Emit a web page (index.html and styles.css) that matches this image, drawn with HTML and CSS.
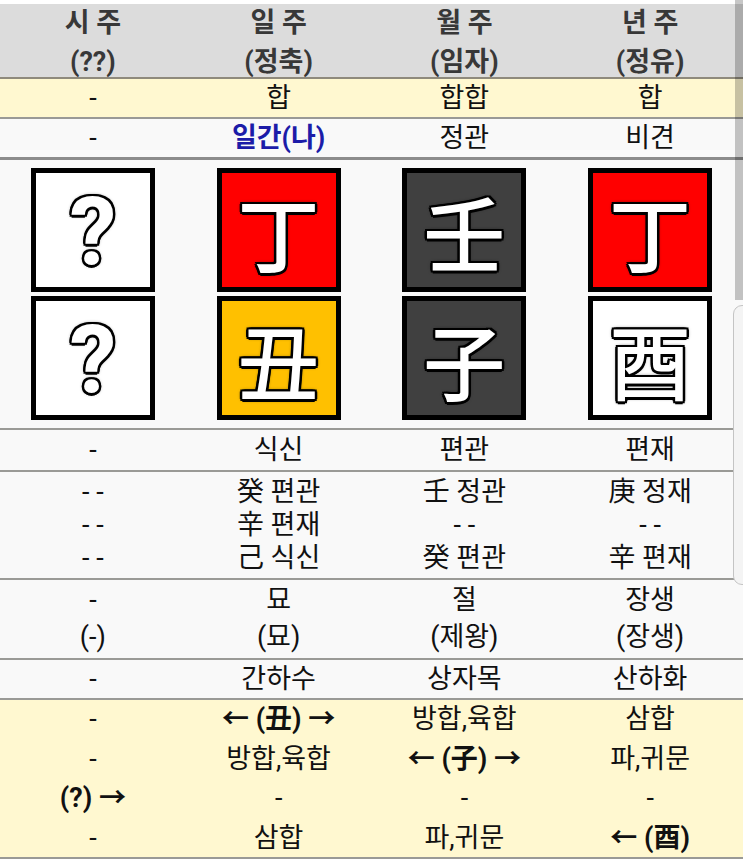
FILE: index.html
```html
<!DOCTYPE html>
<html lang="ko">
<head>
<meta charset="utf-8">
<link rel="stylesheet" href="styles.css">
</head>
<body>
<div class="page">
  <div class="table">
    <div class="row head">
      <div class="cell"><span>시 주</span><span>(??)</span></div>
      <div class="cell"><span>일 주</span><span>(정축)</span></div>
      <div class="cell"><span>월 주</span><span>(임자)</span></div>
      <div class="cell"><span>년 주</span><span>(정유)</span></div>
    </div>
    <div class="row yellow r1">
      <div class="cell">-</div>
      <div class="cell">합</div>
      <div class="cell">합합</div>
      <div class="cell">합</div>
    </div>
    <div class="row plain r1 thick">
      <div class="cell">-</div>
      <div class="cell blue">일간(나)</div>
      <div class="cell">정관</div>
      <div class="cell">비견</div>
    </div>
    <div class="row plain pillars">
      <div class="cell stack">
        <div class="box white"><span class="q">?</span></div>
        <div class="box white"><span class="q">?</span></div>
      </div>
      <div class="cell stack">
        <div class="box red"><span class="han">丁</span></div>
        <div class="box amber"><span class="han">丑</span></div>
      </div>
      <div class="cell stack">
        <div class="box dark"><span class="han">壬</span></div>
        <div class="box dark"><span class="han">子</span></div>
      </div>
      <div class="cell stack">
        <div class="box red"><span class="han">丁</span></div>
        <div class="box white"><span class="han">酉</span></div>
      </div>
    </div>
    <div class="row plain r1 r-sik">
      <div class="cell">-</div>
      <div class="cell">식신</div>
      <div class="cell">편관</div>
      <div class="cell">편재</div>
    </div>
    <div class="row plain multi r-jj">
      <div class="cell"><span>- -</span><span>- -</span><span>- -</span></div>
      <div class="cell"><span>癸 편관</span><span>辛 편재</span><span>己 식신</span></div>
      <div class="cell"><span>壬 정관</span><span>- -</span><span>癸 편관</span></div>
      <div class="cell"><span>庚 정재</span><span>- -</span><span>辛 편재</span></div>
    </div>
    <div class="row plain multi r-un">
      <div class="cell"><span>-</span><span>(-)</span></div>
      <div class="cell"><span>묘</span><span>(묘)</span></div>
      <div class="cell"><span>절</span><span>(제왕)</span></div>
      <div class="cell"><span>장생</span><span>(장생)</span></div>
    </div>
    <div class="row plain r1 r-nap">
      <div class="cell">-</div>
      <div class="cell">간하수</div>
      <div class="cell">상자목</div>
      <div class="cell">산하화</div>
    </div>
    <div class="row yellow multi r-rel">
      <div class="cell"><span>-</span><span>-</span><span class="b">(?) →</span><span>-</span></div>
      <div class="cell"><span class="b">← (丑) →</span><span>방합,육합</span><span>-</span><span>삼합</span></div>
      <div class="cell"><span>방합,육합</span><span class="b">← (子) →</span><span>-</span><span>파,귀문</span></div>
      <div class="cell"><span>삼합</span><span>파,귀문</span><span>-</span><span class="b">← (酉)</span></div>
    </div>
  </div>
  <div class="edge"></div>
  <div class="thumb"></div>
</div>
</body>
</html>
```

FILE: styles.css
```css
html, body {
  margin: 0;
  padding: 0;
  background: #ffffff;
}
body {
  width: 743px;
  height: 861px;
  overflow: hidden;
  font-family: Roboto, "Noto Sans CJK KR", sans-serif;
  color: #111111;
}
.page {
  position: relative;
  width: 743px;
  height: 861px;
  padding-top: 4px;
  box-sizing: border-box;
}
.table {
  width: 743px;
}
.row {
  display: grid;
  grid-template-columns: repeat(4, 1fr);
  border-bottom: 2px solid #9a9a96;
  box-sizing: border-box;
}
.cell {
  display: flex;
  flex-direction: column;
  align-items: center;
  justify-content: center;
  font-size: 27px;
  line-height: 32px;
  white-space: nowrap;
}
.head {
  background: #dcdcdc;
  height: 75px;
  border-bottom-color: #8f8a7c;
}
.head .cell {
  font-weight: 700;
  font-size: 27px;
  line-height: 39px;
  color: #383838;
  padding-bottom: 6px;
}
.yellow {
  background: #fff8d0;
}
.plain {
  background: #f9f9f9;
}
.r1 {
  height: 40px;
}
.thick {
  border-bottom: 3px solid #8c8c8c;
  height: 41px;
}
.blue {
  color: #1c1ca8;
  font-weight: 700;
}
.pillars {
  height: 270px;
}
.stack {
  gap: 4px;
}
.box {
  width: 124px;
  height: 124px;
  box-sizing: border-box;
  border: 5px solid #000000;
  display: flex;
  align-items: center;
  justify-content: center;
  overflow: hidden;
}
.box.white { background: #ffffff; }
.box.red { background: #ff0000; }
.box.amber { background: #ffc000; }
.box.dark { background: #404040; }
.han, .q {
  color: #ffffff;
  text-shadow:
    -2.5px 0 #000, 2.5px 0 #000, 0 -2.5px #000, 0 2.5px #000,
    -2px -2px #000, 2px -2px #000, -2px 2px #000, 2px 2px #000,
    0 0 4px #000;
}
.han {
  font-family: "Noto Sans CJK KR", sans-serif;
  font-size: 82px;
  font-weight: 500;
  line-height: 82px;
  margin-top: 2px;
}
.q {
  font-family: Roboto, sans-serif;
  font-size: 94px;
  font-weight: 700;
  line-height: 94px;
  margin-top: 4px;
}
.r-sik {
  height: 42px;
}
.multi .cell {
  line-height: 33px;
}
.r-jj {
  height: 108px;
}
.r-un {
  height: 80px;
}
.r-un .cell {
  line-height: 37px;
}
.r-nap {
  height: 40px;
}
.r-rel {
  height: 159px;
}
.r-rel .cell {
  line-height: 39.5px;
}
.b {
  font-weight: 700;
}
.edge {
  position: absolute;
  top: 0;
  right: 0;
  width: 8px;
  height: 300px;
  background: rgba(0, 0, 0, 0.22);
}
.thumb {
  position: absolute;
  top: 305px;
  left: 733px;
  width: 20px;
  height: 280px;
  box-sizing: border-box;
  border: 1px solid #c4c4c4;
  border-radius: 9px;
  background: #f4f4f4;
}
```
